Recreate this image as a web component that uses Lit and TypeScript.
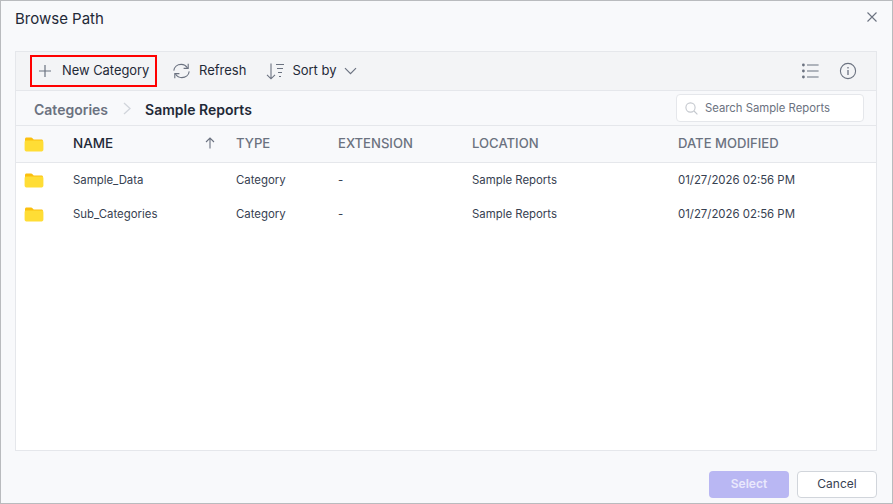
import { LitElement, html, css } from "lit";
import { customElement } from "lit/decorators.js";

const folder = html`<svg class="folder" width="20" height="15" viewBox="0 0 20 15"><path d="M1 2.2C1 1.2 1.6.6 2.5.6h4.6c.6 0 1 .2 1.4.6l1.2 1.2h7.8c.9 0 1.5.6 1.5 1.5V6H1z" fill="#fbbf0e"/><path d="M.6 5.4C.6 4.2 1.2 3.6 2.2 3.6h15.6c1 0 1.6.6 1.6 1.8v7.2c0 1-.7 1.8-1.7 1.8H2.3c-1 0-1.7-.8-1.7-1.8z" fill="#ffdd35"/></svg>`;

const rows = [
  ["Sample_Data", "Category", "-", "Sample Reports", "01/27/2026 02:56 PM"],
  ["Sub_Categories", "Category", "-", "Sample Reports", "01/27/2026 02:56 PM"],
];

@customElement("app-root")
export class AppRoot extends LitElement {
  static styles = css`
    :host { display: block; width: 893px; height: 504px; font-family: Inter, "Liberation Sans", sans-serif; color: #1f2937; }
    * { box-sizing: border-box; }
    .dialog { width: 893px; height: 504px; background: #f8f9fb; border: 1px solid #b9bbbe; display: flex; flex-direction: column; }
    .head { height: 50px; flex: none; display: flex; justify-content: space-between; padding: 9px 13px 0 14px; }
    .title { font-size: 15px; line-height: 18px; color: #1f2937; }
    .panel { margin: 0 15px 0 14px; flex: none; height: 400px; background: #fff; border: 1px solid #e5e7eb; display: flex; flex-direction: column; }
    .toolbar { height: 39px; flex: none; background: #f3f4f6; border-bottom: 1px solid #e5e7eb; display: flex; align-items: center; padding: 0 19px 0 14px; }
    .btn { display: flex; align-items: center; font-size: 13px; line-height: 16px; color: #1f2937; white-space: nowrap; }
    .btn span { padding-bottom: 2px; }
    .new { width: 127px; height: 32px; border: 2px solid #f00; padding-left: 6px; gap: 10px; font-size: 12.9px; }
    .new span { padding-bottom: 0; }
    .refresh { margin-left: 15px; gap: 8px; }
    .sort { margin-left: 20px; gap: 7px; }
    .spacer { flex: 1; }
    .tools { display: flex; align-items: center; gap: 20px; }
    .crumbs { height: 35px; flex: none; background: #f8f9fb; border-bottom: 1px solid #e5e7eb; display: flex; align-items: center; padding: 0 12px 0 18px; font-size: 14px; font-weight: 600; }
    .crumb1 { color: #6b7280; }
    .crumb-sep { margin: 0 14px 0 15px; display: flex; }
    .crumb2 { color: #1f2937; }
    .crumb1, .crumb2 { padding-top: 2px; }
    .search { margin-left: auto; width: 188px; height: 28px; background: #fff; border: 1px solid #e5e7eb; border-radius: 4px; display: flex; align-items: center; gap: 7px; padding-left: 8px; font-weight: 400; color: #6b7280; }
    .search span { font-size: 11.3px; }
    .row { display: grid; grid-template-columns: 57px 163px 102px 134px 206px 1fr; align-items: center; }
    .thead { height: 37px; flex: none; background: #f8f9fb; border-bottom: 1px solid #e5e7eb; font-size: 13.1px; line-height: 16px; font-weight: 500; color: #6b7280; }
    .thead > div:not(.cell-ic) { padding-bottom: 2px; }
    .thead .name { color: #1f2937; display: flex; justify-content: space-between; padding-right: 21px; align-items: center; font-size: 13.5px; }
    .cell-ic { padding-left: 8px; display: flex; align-items: center; }
    .trow { height: 34px; font-size: 11.4px; line-height: 14px; color: #374151; }
    .trow > div:not(.cell-ic) { padding-bottom: 1px; }
    .foot { flex: 1; display: flex; justify-content: flex-end; gap: 8px; padding: 20px 15px 0 0; }
    .b { width: 80px; height: 27px; border-radius: 4px; font-size: 12px; line-height: 14px; padding-bottom: 1px; display: flex; align-items: center; justify-content: center; }
    .select { background: #b9b7f3; color: #e9e8fc; font-weight: 600; }
    .cancel { background: #fff; border: 1px solid #d1d5db; color: #374151; }
    svg { display: block; flex: none; }
  `;

  render() {
    return html`<div class="dialog">
      <div class="head">
        <div class="title">Browse Path</div>
        <svg width="14" height="14" viewBox="0 0 14 14"><path d="M2.5 2.5l9 9M11.5 2.5l-9 9" stroke="#6b7280" stroke-width="1.1" fill="none"/></svg>
      </div>
      <div class="panel">
        <div class="toolbar">
          <div class="btn new">
            <svg width="14" height="14" viewBox="0 0 14 14"><path d="M7 1v12M1 7h12" stroke="#6b7280" stroke-width="1.2" fill="none"/></svg>
            <span>New Category</span>
          </div>
          <div class="btn refresh">
            <svg width="19" height="18" viewBox="0 0 19 18" fill="none" stroke="#6b7280" stroke-width="1.1"><path d="M1.8 8.6C2.2 5 5.2 2.4 9.2 2.4c2.7 0 4.8 1.2 6.3 3.6"/><path d="M16.2 1.8v4.6h-4.6"/><path d="M17.2 9.4c-.4 3.6-3.4 6.2-7.4 6.2-2.7 0-4.8-1.2-6.3-3.6"/><path d="M2.8 16.2v-4.6h4.6"/></svg>
            <span>Refresh</span>
          </div>
          <div class="btn sort">
            <svg width="19" height="19" viewBox="0 0 19 19" fill="none" stroke="#6b7280" stroke-width="1.1"><path d="M5 1.5v15M1 12.8l4 4 4-4"/><path d="M10 2.5h8M11 6.5h6M12 10.5h4M13 14.5h2"/></svg>
            <span>Sort by</span>
            <svg width="13" height="8" viewBox="0 0 13 8" fill="none" stroke="#6b7280" stroke-width="1.2"><path d="M1 1.2l5.5 5.5L12 1.2"/></svg>
          </div>
          <div class="spacer"></div>
          <div class="tools">
            <svg width="18" height="16" viewBox="0 0 18 16" fill="#6b7280"><circle cx="2.4" cy="2" r="1.4"/><circle cx="2.4" cy="8" r="1.4"/><circle cx="2.4" cy="14" r="1.4"/><path d="M6 1.4h11.6v1.2H6zM6 7.4h11.6v1.2H6zM6 13.4h11.6v1.2H6z"/></svg>
            <svg width="18" height="18" viewBox="0 0 18 18" fill="none" stroke="#6b7280" stroke-width="1.1"><circle cx="9" cy="9" r="7.6"/><path d="M9 8v5" stroke-width="1.3"/><path d="M9 5v1.4" stroke-width="1.3"/></svg>
          </div>
        </div>
        <div class="crumbs">
          <span class="crumb1">Categories</span>
          <span class="crumb-sep"><svg width="8" height="13" viewBox="0 0 8 13" fill="none" stroke="#d1d5db" stroke-width="1.3"><path d="M1 1l6 5.5L1 12"/></svg></span>
          <span class="crumb2">Sample Reports</span>
          <div class="search">
            <svg width="13" height="13" viewBox="0 0 13 13" fill="none" stroke="#c4c8ce" stroke-width="1.1"><circle cx="5.5" cy="5.5" r="4.6"/><path d="M9 9l3.4 3.4"/></svg>
            <span>Search Sample Reports</span>
          </div>
        </div>
        <div class="row thead">
          <div class="cell-ic">${folder}</div>
          <div class="name">NAME
            <svg width="10" height="12" viewBox="0 0 10 12" fill="none" stroke="#6b7280" stroke-width="1.1"><path d="M5 11.5V1M1 5l4-4 4 4"/></svg>
          </div>
          <div>TYPE</div><div>EXTENSION</div><div>LOCATION</div><div>DATE MODIFIED</div>
        </div>
        <div class="tbody">
          ${rows.map((r) => html`<div class="row trow">
            <div class="cell-ic">${folder}</div>
            ${r.map((c) => html`<div>${c}</div>`)}
          </div>`)}
        </div>
      </div>
      <div class="foot">
        <div class="b select">Select</div>
        <div class="b cancel">Cancel</div>
      </div>
    </div>`;
  }
}
